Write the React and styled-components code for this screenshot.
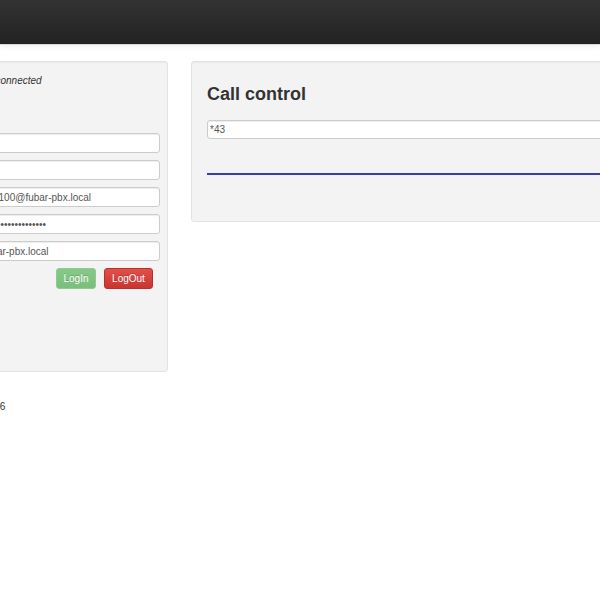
import React from "react";
import styled, { createGlobalStyle } from "styled-components";

const Global = createGlobalStyle`
  html, body { margin: 0; padding: 0; overflow: hidden; background: #fff; }
  body { font-family: "Liberation Sans", Arial, sans-serif; font-size: 10px; color: #333; }
`;

const Navbar = styled.div`
  height: 44px;
  background: linear-gradient(to bottom, #333333, #222222);
  border-bottom: 1px solid #d8d8d8;
  box-shadow: 0 1px 6px rgba(0, 0, 0, 0.08);
`;

const Main = styled.div`
  width: 700px;
  margin-left: -32px;
  padding-top: 16px;
`;

const Row = styled.div`
  display: flex;
  gap: 23px;
  align-items: flex-start;
`;

const Well = styled.div`
  flex: 0 0 auto;
  background: #f3f3f3;
  border: 1px solid #e3e3e3;
  border-radius: 3px;
  box-shadow: inset 0 1px 1px rgba(0, 0, 0, 0.04);
  box-sizing: border-box;
  width: ${(p) => p.$w}px;
  height: ${(p) => p.$h}px;
  padding: ${(p) => p.$pad};
`;

const Status = styled.div`
  font-style: italic;
  font-size: 10px;
  line-height: 14px;
  height: 14px;
  margin-bottom: 45px;
  padding-left: 1px;
`;

const Form = styled.div`
  display: flex;
  flex-direction: column;
  gap: 7px;
  padding: 0 7px 0 0;
`;

const Input = styled.input`
  box-sizing: border-box;
  height: ${(p) => p.$h || 20}px;
  width: 100%;
  margin: 0;
  padding: 2px 4px 2px 2px;
  font-family: "Liberation Sans", Arial, sans-serif;
  font-size: 10px;
  color: #555;
  background: #fff;
  border: 1px solid #cccccc;
  border-radius: 3px;
  box-shadow: inset 0 1px 1px rgba(0, 0, 0, 0.075);
  outline: none;
`;

const Buttons = styled.div`
  display: flex;
  justify-content: flex-end;
  gap: 8px;
  padding-right: 7px;
`;

const Btn = styled.button`
  box-sizing: border-box;
  height: 21px;
  width: ${(p) => p.$w}px;
  padding: 0;
  font-family: "Liberation Sans", Arial, sans-serif;
  font-size: 10px;
  color: #fff;
  border-radius: 3px;
  border: 1px solid ${(p) => (p.$kind === "success" ? "#8fcb90" : "#b8302b")};
  background: ${(p) =>
    p.$kind === "success"
      ? "linear-gradient(to bottom, #86c887, #7cbf7d)"
      : "linear-gradient(to bottom, #e2504c, #c9352f)"};
  text-shadow: 0 -1px 0 rgba(0, 0, 0, 0.2);
`;

const Heading = styled.h2`
  margin: 0 0 15px;
  font-size: 18px;
  line-height: 22px;
  font-weight: bold;
  color: #333;
`;

const Line = styled.div`
  height: 2px;
  background: #3b3baa;
  margin-top: 34px;
`;

const Footer = styled.div`
  margin-top: 29px;
  padding-left: 10px;
  font-size: 10px;
  line-height: 12px;
`;

export default function App() {
  return (
    <>
      <Global />
      <Navbar />
      <Main>
        <Row>
          <Well $w={200} $h={311} $pad="12px 0 0 11px">
            <Status>Disconnected</Status>
            <Form>
              <Input defaultValue="100" />
              <Input defaultValue="100" />
              <Input defaultValue="sip:100@fubar-pbx.local" />
              <Input type="password" defaultValue="abcdefghijklmnopqr" />
              <Input defaultValue="fubar-pbx.local" />
              <Buttons>
                <Btn $kind="success" $w={40}>LogIn</Btn>
                <Btn $kind="danger" $w={49}>LogOut</Btn>
              </Buttons>
            </Form>
          </Well>
          <Well $w={440} $h={161} $pad="21px 15px 0 15px">
            <Heading>Call control</Heading>
            <Input $h={19} defaultValue="*43" />
            <Line />
          </Well>
        </Row>
        <Footer>v0.0.6</Footer>
      </Main>
    </>
  );
}
